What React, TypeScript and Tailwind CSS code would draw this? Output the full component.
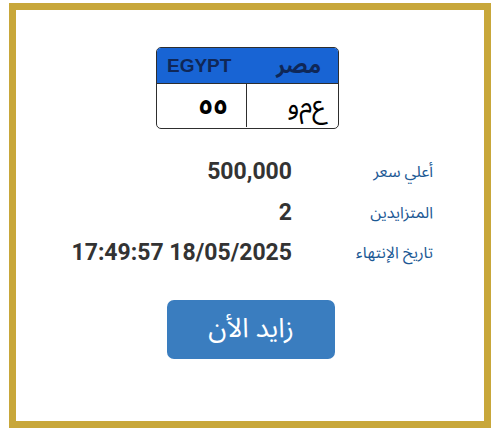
const rows = [
  { label: 'أعلي سعر', value: '500,000' },
  { label: 'المتزايدين', value: '2' },
  { label: 'تاريخ الإنتهاء', value: '17:49:57 18/05/2025' },
]

const arabic = { fontFamily: '"Noto Sans Arabic", "Noto Naskh Arabic", "DejaVu Sans", sans-serif' }

function Plate() {
  return (
    <div className="ml-[140px] mt-[37px] h-[82px] w-[183px] overflow-hidden rounded-[5px] border-[1.5px] border-[#2e2e2e] bg-white">
      <div className="flex h-[36px] items-center justify-between border-b-[1.5px] border-[#2e2e2e] bg-[#1864d4] pl-[10px] pr-[17px]">
        <span className="font-['Liberation_Sans',Arial,sans-serif] text-[19px] font-bold leading-[24px] text-[#0f2757]">
          EGYPT
        </span>
        <span dir="rtl" style={arabic} className="text-[22px] font-bold leading-[30px] text-[#0f2757]">
          مصر
        </span>
      </div>
      <div className="flex h-[43px]">
        <div
          dir="rtl"
          style={arabic}
          className="flex w-[90px] items-center justify-start border-r-[1.5px] border-[#2e2e2e] pr-[18px] text-[26px] font-bold leading-[36px] text-black"
        >
          ٥٥
        </div>
        <div
          dir="rtl"
          style={arabic}
          className="flex flex-1 items-center justify-start pr-[12px] text-[27px] leading-[36px] text-black"
        >
          ع‌م‌و
        </div>
      </div>
    </div>
  )
}

export default function App() {
  return (
    <div className="h-[430px] w-[494px] bg-white pl-[9px] pt-[3px]">
      <div className="h-[425px] w-[482px] border-[7px] border-[#c8a73a] bg-white">
        <Plate />
        <div className="mt-[23px]">
          {rows.map((row) => (
            <div key={row.label} className="flex h-[40.5px] items-center">
              <div className="w-[276px] text-right font-['Roboto',sans-serif] text-[23px] font-bold text-[#333333]">
                {row.value}
              </div>
              <div
                dir="rtl"
                style={arabic}
                className="w-[141px] text-right text-[16px] text-[#1c5994]"
              >
                {row.label}
              </div>
            </div>
          ))}
        </div>
        <button
          type="button"
          dir="rtl"
          style={arabic}
          className="ml-[151px] mt-[26px] flex h-[59px] w-[168px] items-center justify-center rounded-[7px] bg-[#3a7dbf] text-[27px] text-white"
        >
          زايد الأن
        </button>
      </div>
    </div>
  )
}
